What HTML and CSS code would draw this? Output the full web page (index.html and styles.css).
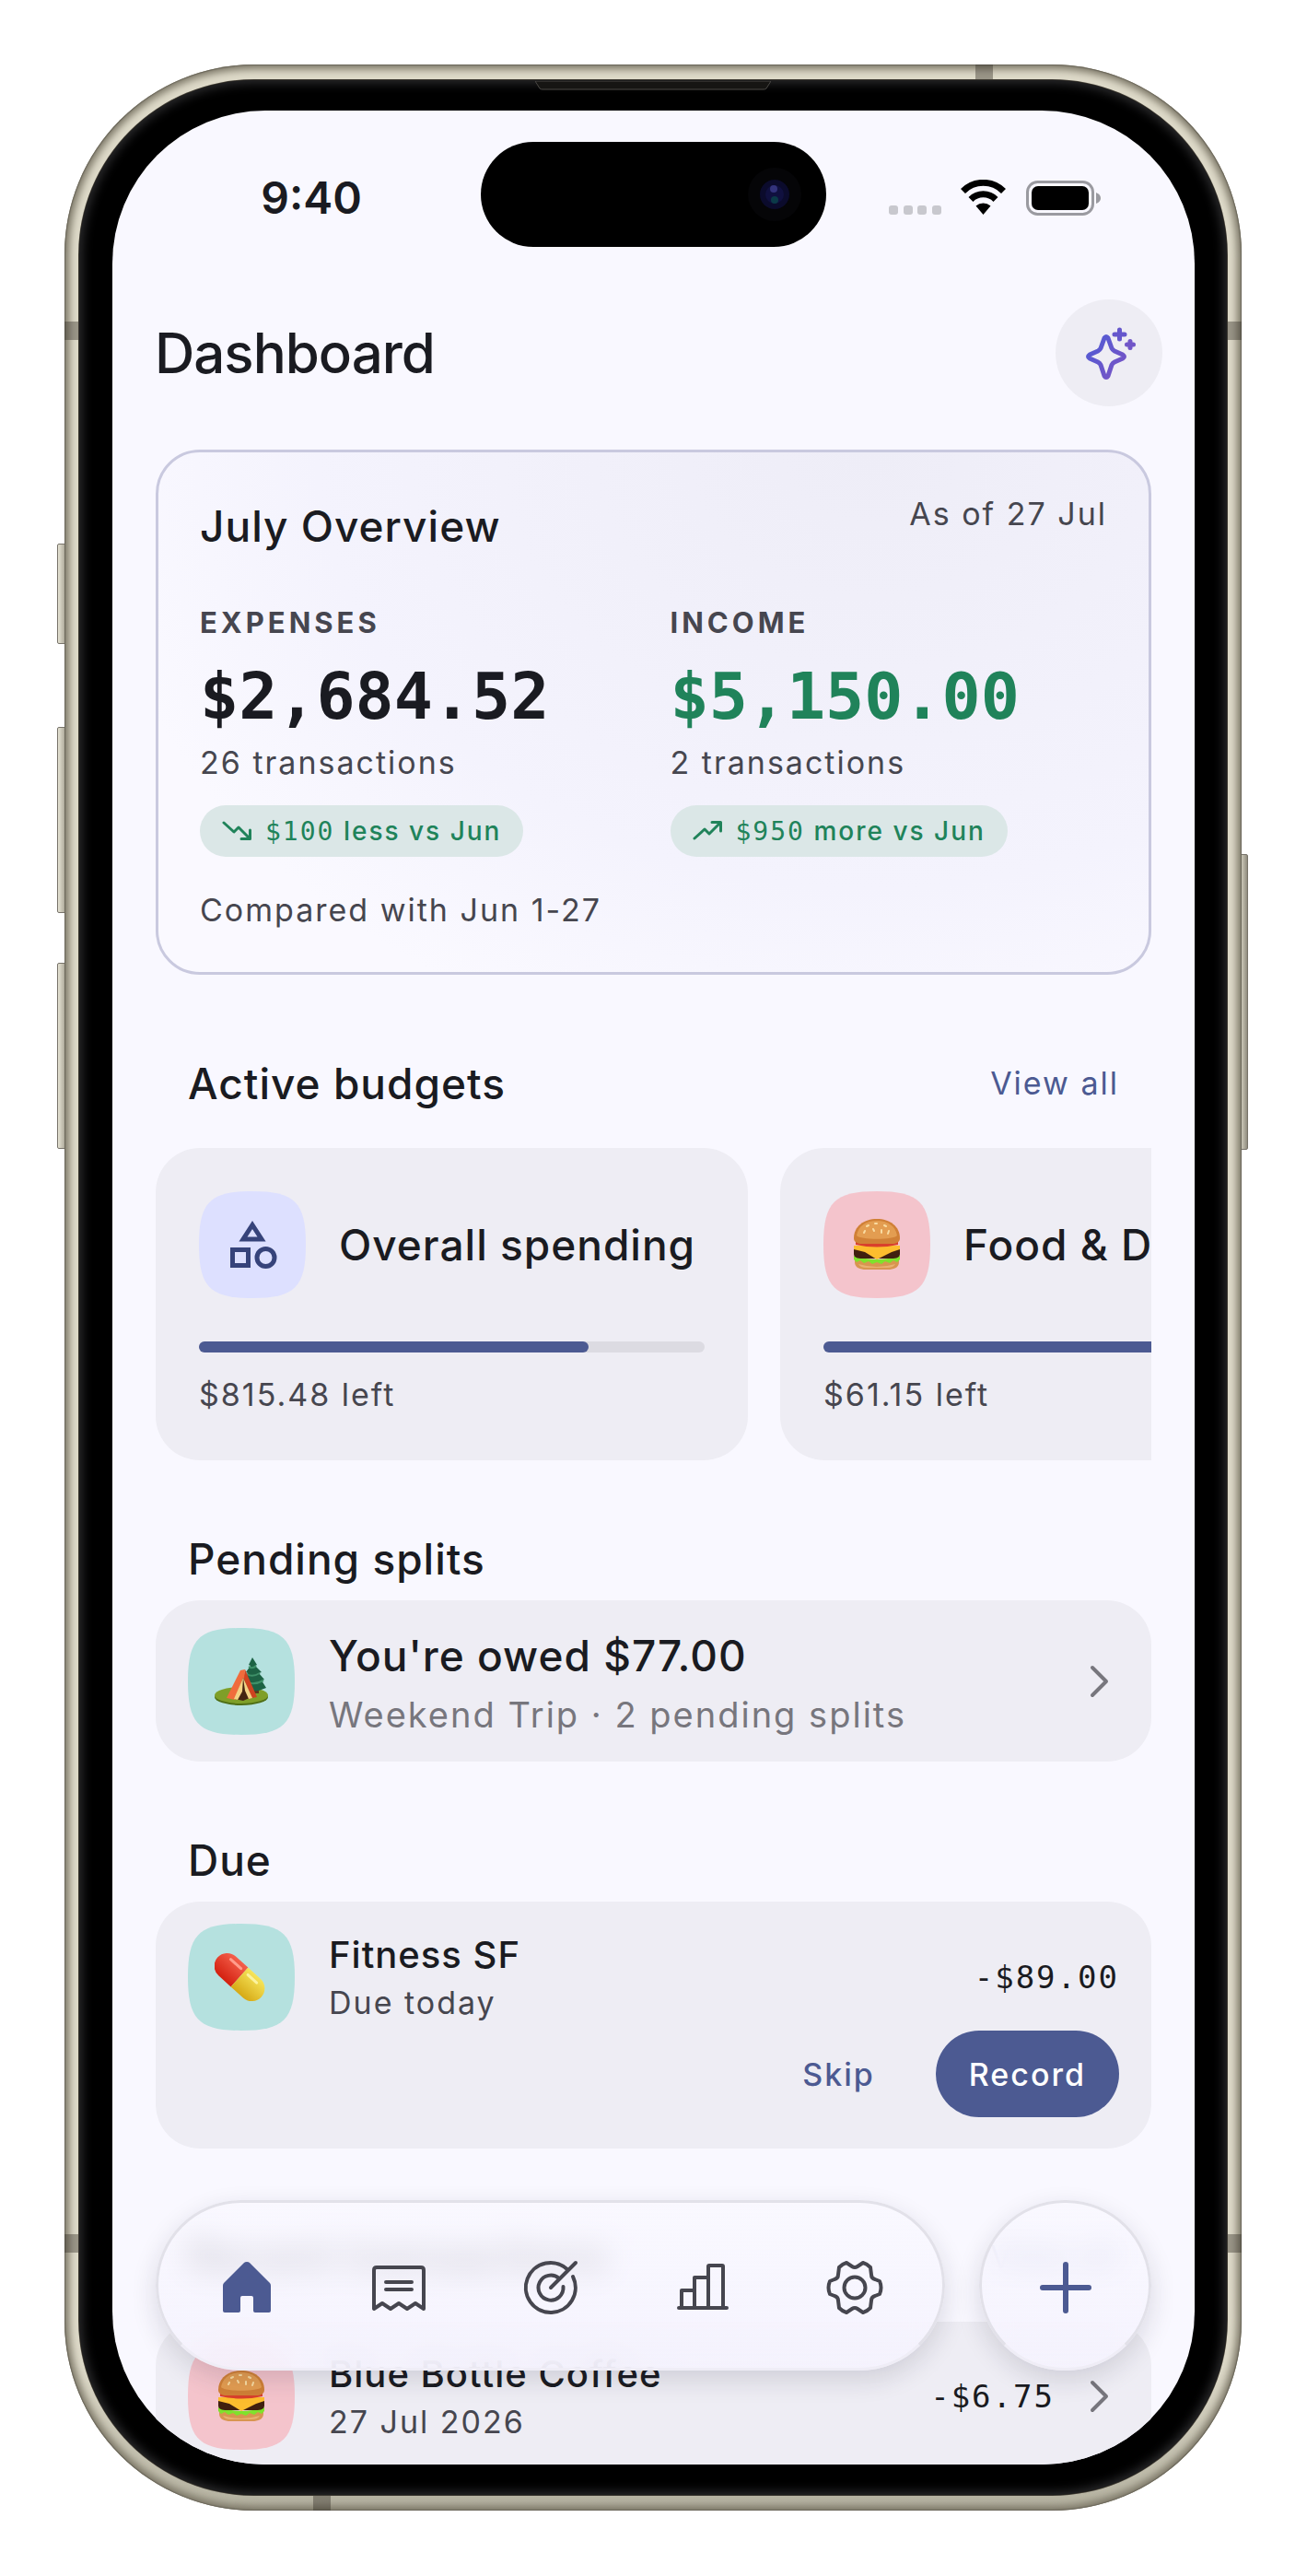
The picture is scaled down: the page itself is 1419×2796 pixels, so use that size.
FILE: index.html
```html
<!DOCTYPE html>
<html lang="en">
<head>
<meta charset="utf-8">
<meta name="viewport" content="width=device-width, initial-scale=1">
<title>Dashboard</title>
<link rel="stylesheet" href="styles.css">
</head>
<body>
<svg class="sprite" aria-hidden="true">
  <symbol id="squircle" viewBox="0 0 116 116"><path d="M58 0C104 0 116 12 116 58S104 116 58 116 0 104 0 58 12 0 58 0Z"/></symbol>
  <symbol id="chevron" viewBox="0 0 42 42"><path d="M13 6l15 15-15 15" fill="none" stroke="#77767d" stroke-width="4" stroke-linecap="round" stroke-linejoin="round"/></symbol>
  <symbol id="burger" viewBox="0 0 56 56">
    <path d="M4 44h48v3c0 6-6 8-12 8H16c-6 0-12-2-12-8z" fill="#d89550"/>
    <path d="M8 49q20 6 40 0-2 4-9 4H17q-7 0-9-4z" fill="#e8b070"/>
    <path d="M3 40q25 8 50 0l0 4-3 3-4-2-4 3-5-2-4 3-5-2-5 2-4-3-5 2-4-3-4 2-3-3z" fill="#7fe22c"/>
    <path d="M3 33h50v5c0 4-4 5-9 5H12c-5 0-9-1-9-5z" fill="#40200f"/>
    <path d="M3 29h50v4l-9 3-16 8-13-8-12-3z" fill="#fdbd2e"/>
    <path d="M5 25h46v3q-23 5-46 0z" fill="#d9402c"/>
    <path d="M3 21C3 8 14 0 28 0s25 8 25 21c0 4-4 6-9 6H12c-5 0-9-2-9-6z" fill="#d08036"/>
    <path d="M6 18C8 7 17 2 28 2s20 5 22 16c-4 5-40 5-44 0z" fill="#e39d51"/>
    <path d="M17 8l2-1M26 5h2M36 7l2 1M24 11l1 2M33 12v3M41 13l-1 3M15 13l-1 2" stroke="#f9dca2" stroke-width="2" stroke-linecap="round"/>
  </symbol>
  <symbol id="tent" viewBox="0 0 58 58">
    <ellipse cx="29" cy="46" rx="29" ry="9" fill="#4f6f16"/>
    <ellipse cx="29" cy="44" rx="29" ry="9" fill="#7f9f28"/>
    <path d="M43 35h5v7h-5z" fill="#5b3a1c"/>
    <path d="M41 3l5 8-2 1 7 7-3 1 6 7-3 1 5 8q-14 7-28 0l5-8-3-1 6-7-2-1 5-7-2-1z" fill="#1d6244"/>
    <path d="M37 13q4 3 8-1M35 21q6 4 14-1M33 29q9 5 20-1" stroke="#3e9068" stroke-width="2" fill="none"/>
    <path d="M33 16l13 30-10 2-5-20z" fill="#cf4320"/>
    <path d="M28 17l5-1-1 10-10 23-9-2z" fill="#f06c3c"/>
    <path d="M31 25l9 21-9 4-9-2z" fill="#452612"/>
    <path d="M31 25l-1 15-5 9-4-1zM31 25l2 14 4 9 4-1z" fill="#f3d385"/>
  </symbol>
</svg>

<main class="phone">
  <span class="key key-action"></span>
  <span class="key key-up"></span>
  <span class="key key-down"></span>
  <span class="key key-power"></span>
  <div class="frame">
    <span class="band band-left-top"></span>
    <span class="band band-left-bottom"></span>
    <span class="band band-right-top"></span>
    <span class="band band-right-bottom"></span>
    <span class="band band-top"></span>
    <span class="band band-bottom"></span>
    <div class="bezel">
      <svg class="speaker" viewBox="0 0 256 10" aria-hidden="true"><path d="M0 0h256l-5 8q-1 1-3 1H8q-2 0-3-1z" fill="#161513" stroke="#4a4845"/></svg>
      <div class="screen">

        <div class="status">
          <time class="clock">9:40</time>
          <div class="island">
            <svg width="60" height="60" viewBox="0 0 60 60" aria-hidden="true">
              <circle cx="30" cy="30" r="29" fill="#050507"/>
              <circle cx="30" cy="30" r="16" fill="#0b0b2c"/>
              <circle cx="30" cy="30" r="10" fill="#10103f"/>
              <circle cx="29" cy="24" r="4" fill="#33337c"/>
              <circle cx="30" cy="36" r="4" fill="#0b3a48"/>
            </svg>
          </div>
          <svg class="signals" width="230" height="40" viewBox="0 0 230 40" role="img" aria-label="Wi-Fi on, battery full">
            <g fill="#c8c8ce"><rect x="0" y="28" width="10" height="10" rx="3"/><rect x="16" y="28" width="10" height="10" rx="3"/><rect x="31" y="28" width="10" height="10" rx="3"/><rect x="47" y="28" width="10" height="10" rx="3"/></g>
            <g fill="none" stroke="#000" stroke-width="7"><path d="M80.500 12.500a31 31 0 0 1 44 0"/><path d="M89 21.500a19 19 0 0 1 27 0"/></g>
            <path d="M102.500 38l-8-9.500a12 12 0 0 1 16 0z"/>
            <rect x="150.500" y="2.500" width="71" height="35" rx="11" fill="none" stroke="#9a9aa0" stroke-width="3"/>
            <rect x="155" y="7" width="62" height="26" rx="7"/>
            <path d="M225 14q5 2 5 6t-5 6z" fill="#9a9aa0"/>
          </svg>
        </div>

        <header class="topbar">
          <h1>Dashboard</h1>
          <button class="assistant" type="button" aria-label="Assistant">
            <svg width="60" height="60" viewBox="0 0 60 60" fill="none">
              <defs><linearGradient id="spark" x1="0" y1="0" x2="1" y2="1"><stop offset="0" stop-color="#4f5bd5"/><stop offset="1" stop-color="#7b54c4"/></linearGradient></defs>
              <path d="M25 14q2-3 4 0l4 11q1 2 3 3l9 4q3 2 0 4l-9 4q-2 1-3 3l-4 12q-2 3-4 0l-4-12q-1-2-3-3l-9-4q-3-2 0-4l9-4q2-1 3-3z" stroke="url(#spark)" stroke-width="5" stroke-linejoin="round"/>
              <path d="M41.500 5v10M36 10h11" stroke="#6557cc" stroke-width="5" stroke-linecap="round"/>
              <path d="M53 17.500v7M49.500 21h7" stroke="#7156c8" stroke-width="5" stroke-linecap="round"/>
            </svg>
          </button>
        </header>

        <div class="content">
          <section class="overview">
            <div class="overview-head">
              <h2>July Overview</h2>
              <p class="small">As of 27 Jul</p>
            </div>
            <div class="totals">
              <div>
                <h3>Expenses</h3>
                <p class="amount">$2,684.52</p>
                <p class="small">26 transactions</p>
                <p class="chip">
                  <svg width="32" height="24" viewBox="0 0 32 24" aria-hidden="true"><path d="M2 3l11 10 5-5 12 12M21 20.500h9.500V11" fill="none" stroke="currentColor" stroke-width="3" stroke-linecap="round" stroke-linejoin="round"/></svg>
                  <span><span class="figures">$100</span> less vs Jun</span>
                </p>
              </div>
              <div>
                <h3>Income</h3>
                <p class="amount income">$5,150.00</p>
                <p class="small">2 transactions</p>
                <p class="chip">
                  <svg width="32" height="24" viewBox="0 0 32 24" aria-hidden="true"><path d="M2 20l11-10 5 5L30 3M21 2.500h9.500V12" fill="none" stroke="currentColor" stroke-width="3" stroke-linecap="round" stroke-linejoin="round"/></svg>
                  <span><span class="figures">$950</span> more vs Jun</span>
                </p>
              </div>
            </div>
            <p class="small compared">Compared with Jun 1-27</p>
          </section>

          <section>
            <div class="section-head with-link"><h2>Active budgets</h2><a href="#budgets">View all</a></div>
            <div class="budgets" id="budgets">
              <article class="card budget">
                <div class="budget-name">
                  <span class="tile lavender"><svg class="shape"><use href="#squircle"/></svg>
                    <svg class="glyph" width="56" height="56" viewBox="0 0 56 56" fill="none" stroke="#36437a" stroke-width="5" aria-hidden="true"><path d="M28 6.500l10 15.500h-20z"/><rect x="6.500" y="33.500" width="17" height="17"/><circle cx="42.500" cy="42" r="9.500"/></svg>
                  </span>
                  <h3>Overall spending</h3>
                </div>
                <div class="meter" role="progressbar" aria-label="Overall spending" aria-valuenow="77"><span style="width:77%"></span></div>
                <p class="small">$815.48 left</p>
              </article>
              <article class="card budget">
                <div class="budget-name">
                  <span class="tile pink"><svg class="shape"><use href="#squircle"/></svg><svg class="glyph" width="56" height="56"><use href="#burger"/></svg></span>
                  <h3>Food &amp; Drink</h3>
                </div>
                <div class="meter" role="progressbar" aria-label="Food and drink" aria-valuenow="80"><span style="width:80%"></span></div>
                <p class="small">$61.15 left</p>
              </article>
            </div>
          </section>

          <section>
            <div class="section-head"><h2>Pending splits</h2></div>
            <a class="card split" href="#weekend-trip">
              <span class="tile teal"><svg class="shape"><use href="#squircle"/></svg><svg class="glyph" width="58" height="58"><use href="#tent"/></svg></span>
              <span class="split-text">
                <strong>You're owed $77.00</strong>
                <span>Weekend Trip · 2 pending splits</span>
              </span>
              <svg class="chevron" width="42" height="42"><use href="#chevron"/></svg>
            </a>
          </section>

          <section>
            <div class="section-head"><h2>Due</h2></div>
            <article class="card entry">
              <div class="row">
                <span class="tile teal"><svg class="shape"><use href="#squircle"/></svg>
                  <svg class="glyph" width="58" height="58" viewBox="0 0 58 58" aria-hidden="true">
                    <defs><linearGradient id="red" x1="0" y1="0" x2="0" y2="1"><stop offset="0" stop-color="#f4604c"/><stop offset="1" stop-color="#d3200f"/></linearGradient><linearGradient id="yellow" x1="0" y1="0" x2="0" y2="1"><stop offset="0" stop-color="#f6e55a"/><stop offset="1" stop-color="#d6a915"/></linearGradient></defs>
                    <g transform="rotate(42 27 29)"><path d="M27 15H9a14 14 0 0 0 0 28h18z" fill="url(#red)"/><path d="M27 15h18a14 14 0 0 1 0 28H27z" fill="url(#yellow)"/><path d="M7 21h15" stroke="#ff9c8c" stroke-width="3" stroke-linecap="round"/><path d="M32 21h13" stroke="#fbf3a0" stroke-width="3" stroke-linecap="round"/></g>
                  </svg>
                </span>
                <div class="row-text"><h3>Fitness SF</h3><p class="small">Due today</p></div>
                <p class="figures sum">-$89.00</p>
              </div>
              <div class="actions">
                <button class="button" type="button">Skip</button>
                <button class="button filled" type="button">Record</button>
              </div>
            </article>
          </section>

          <section>
            <div class="section-head with-link"><h2>Recent transactions</h2><a href="#recent">View all</a></div>
            <article class="card entry last" id="recent">
              <div class="row">
                <span class="tile pink"><svg class="shape"><use href="#squircle"/></svg><svg class="glyph" width="56" height="56"><use href="#burger"/></svg></span>
                <div class="row-text"><h3>Blue Bottle Coffee</h3><p class="small">27 Jul 2026</p></div>
                <p class="figures sum">-$6.75</p>
                <svg class="chevron" width="42" height="42"><use href="#chevron"/></svg>
              </div>
            </article>
          </section>
        </div>

        <div class="dock">
          <nav class="glass tabs" aria-label="Main">
            <a href="#home" aria-label="Home" aria-current="page"><svg width="64" height="64" viewBox="0 0 64 64"><path d="M32 4q2 0 3 1l22 22q1 1 1 3v27q0 2-2 2H41q-2 0-2-2V43q0-2-2-2H27q-2 0-2 2v14q0 2-2 2H8q-2 0-2-2V30q0-2 1-3L29 5q1-1 3-1z" fill="#4c5a92"/></svg></a>
            <a href="#transactions" aria-label="Transactions"><svg width="64" height="64" viewBox="0 0 64 64"><path d="M5 55V13q0-3 3-3h48q3 0 3 3v42l-9-6-9 6-9-6-9 6-9-6zM18 26h28M18 34h28"/></svg></a>
            <a href="#goals" aria-label="Goals"><svg width="64" height="64" viewBox="0 0 64 64"><path d="M32 32L59 5M51 13A27 27 0 1 0 56 20M41 22A13.500 13.500 0 1 0 45.500 31"/></svg></a>
            <a href="#reports" aria-label="Reports"><svg width="64" height="64" viewBox="0 0 64 64"><path d="M6 54h52M9 54V35h14M23 54V21h15M38 54V9q0-1 1-1h14q1 0 1 1v45"/></svg></a>
            <a href="#settings" aria-label="Settings"><svg width="64" height="64" viewBox="0 0 64 64"><path d="M23 5q-4 1-8 5l-1 8q0 4-4 5l-5 2q-3 7 0 14l5 2q4 1 4 5l1 8q4 4 8 5l6-4q3-2 6 0l6 4q4-1 8-5l1-8q0-4 4-5l5-2q3-7 0-14l-5-2q-4-1-4-5l-1-8q-4-4-8-5l-6 4q-3 2-6 0z"/><circle cx="32" cy="32" r="11.500"/></svg></a>
          </nav>
          <button class="glass add" type="button" aria-label="Add transaction"><svg width="64" height="64" viewBox="0 0 64 64"><path d="M32 7v50M7 32h50"/></svg></button>
        </div>
      </div>
    </div>
  </div>
</main>
</body>
</html>
```

FILE: styles.css
```css
:root {
  --surface: #f9f8ff;
  --card: #eeedf4;
  --ink: #1a1b21;
  --muted: #46464f;
  --primary: #4c5a92;
  --green: #20835a;
  --mono: "DejaVu Sans Mono", monospace;
  --tracking: 1px;
  --tracking-wide: 2px;
}

* { box-sizing: border-box; }

body {
  margin: 0;
  background: #fff;
  color: var(--ink);
  font-family: Inter, "Liberation Sans", sans-serif;
}

h1, h2, h3, p { margin: 0; font-weight: 500; }
a { color: inherit; text-decoration: none; }
button { border: 0; padding: 0; font: inherit; background: none; }
svg { display: block; flex: none; }
.sprite { position: absolute; width: 0; height: 0; }

/* Device */
.phone { position: relative; padding: 70px 71px 70px 70px; }

.frame {
  position: relative;
  padding: 17px 16px;
  border-radius: 206px;
  background: linear-gradient(#dedac9 94%, #b4b1a0);
  box-shadow: inset 0 0 1px 1px #6a665a, inset 0 0 9px 5px #7b7666;
  overflow: hidden;
}

.bezel {
  position: relative;
  padding: 33px 35px 33px 36px;
  border-radius: 190px;
  background: #000;
  box-shadow: 0 0 0 1px #3b372f, inset 0 0 12px 3px #2e2e30;
}

.screen {
  position: relative;
  overflow: hidden;
  border-radius: 166px;
  background: var(--surface);
}

.speaker {
  position: absolute;
  top: 1px;
  left: 50%;
  width: 256px;
  height: 10px;
  margin-left: -128px;
}

.band { position: absolute; background: rgb(50 46 38 / 40%); }
.band-left-top, .band-left-bottom { left: 0; width: 16px; height: 20px; }
.band-right-top, .band-right-bottom { right: 0; width: 16px; height: 20px; }
.band-left-top, .band-right-top { top: 279px; }
.band-left-bottom, .band-right-bottom { bottom: 280px; }
.band-top { top: 0; right: 270px; width: 19px; height: 17px; }
.band-bottom { bottom: 0; left: 270px; width: 19px; height: 17px; }

.key {
  position: absolute;
  left: 62px;
  width: 12px;
  border: 1px solid #77736a;
  border-radius: 2px;
  background: linear-gradient(90deg, #e6e3d4, #b9b5a6 60%, #8f8b7e);
}
.key-action { top: 590px; height: 109px; }
.key-up { top: 789px; height: 202px; }
.key-down { top: 1045px; height: 202px; }
.key-power { top: 927px; left: auto; right: 64px; height: 321px; }

/* Status bar */
.status {
  display: grid;
  grid-template-columns: 1fr 375px 1fr;
  align-items: center;
  padding-top: 34px;
}
.clock { padding: 8px 0 0 32px; font-size: 48px; font-weight: 600; line-height: 64px; text-align: center; }
.signals { margin: 8px 0 0 68px; }
.island {
  display: flex;
  align-items: center;
  justify-content: flex-end;
  height: 114px;
  padding-right: 26px;
  border-radius: 57px;
  background: #000;
}

/* Header */
.topbar {
  display: flex;
  align-items: center;
  justify-content: space-between;
  padding: 57px 35px 0 46px;
}
h1 { font-size: 60px; line-height: 80px; letter-spacing: -1px; }
.assistant {
  display: grid;
  place-items: center;
  width: 116px;
  height: 116px;
  border-radius: 50%;
  background: var(--card);
}

.content { padding: 47px 47px 0; }

h2 { font-size: 46px; line-height: 64px; letter-spacing: var(--tracking); }
.small { color: var(--muted); font-size: 34px; font-weight: 400; line-height: 48px; letter-spacing: var(--tracking-wide); }
.figures, .amount { font-family: var(--mono); }

/* Overview */
.overview {
  padding: 43px 45px;
  border: 3px solid #c9c9df;
  border-radius: 48px;
  background: radial-gradient(ellipse 80% 120% at 72% 0, #eeedf7, #f4f3fd 70%, #faf9ff);
}
.overview-head { display: flex; justify-content: space-between; }
.overview-head h2 { line-height: 74px; }
.totals { display: grid; grid-template-columns: 1fr 1fr; gap: 36px; padding-top: 48px; }
.totals h3 {
  margin-bottom: 12px;
  color: var(--muted);
  font-size: 31px;
  font-weight: 700;
  line-height: 40px;
  letter-spacing: 4px;
  text-transform: uppercase;
}
.amount { font-size: 70px; font-weight: 700; line-height: 96px; }
.income { color: var(--green); }
.chip {
  display: inline-flex;
  align-items: center;
  gap: 15px;
  height: 56px;
  margin-top: 22px;
  padding: 0 24px;
  border-radius: 28px;
  background: #dbe7e7;
  color: var(--green);
  font-size: 28px;
  letter-spacing: var(--tracking-wide);
  white-space: nowrap;
}
.compared { padding-top: 34px; }

/* Sections */
.section-head { display: flex; align-items: center; justify-content: space-between; padding: 75px 35px 13px; }
.section-head.with-link { padding: 86px 35px 38px; }
.section-head a { color: var(--primary); font-size: 34px; line-height: 48px; letter-spacing: var(--tracking-wide); }
.card { border-radius: 48px; background: var(--card); }

.tile { position: relative; display: grid; flex: none; place-items: center; width: 116px; height: 116px; }
.tile .shape { position: absolute; inset: 0; width: 100%; height: 100%; }
.tile .glyph { position: relative; }
.lavender .shape { fill: #dde0ff; }
.pink .shape { fill: #f4c4cc; }
.teal .shape { fill: #b5e1df; }

.budgets { display: flex; gap: 35px; overflow: hidden; }
.budget { flex: 0 0 59%; min-width: 643px; padding: 47px; }
.budget-name { display: flex; align-items: center; gap: 36px; white-space: nowrap; }
.budget-name h3 { font-size: 46px; line-height: 64px; letter-spacing: var(--tracking); }
.meter { height: 12px; margin: 47px 0 22px; border-radius: 6px; background: #dcdbe2; }
.meter span { display: block; height: 100%; border-radius: 6px; background: var(--primary); }

.split { display: flex; align-items: center; gap: 37px; min-height: 175px; padding: 0 35px; }
.split-text { display: flex; flex: 1; flex-direction: column; padding-top: 8px; line-height: 64px; }
.split-text strong { font-size: 46px; font-weight: 500; letter-spacing: var(--tracking); }
.split-text span { color: #77767d; font-size: 38px; letter-spacing: var(--tracking-wide); }

.entry { padding: 24px 35px 34px; }
.entry.last { padding: 23px 35px 16px; border-radius: 48px 48px 0 0; }
.row { display: flex; align-items: center; gap: 37px; }
.row-text { flex: 1; }
.row-text h3 { font-size: 40px; line-height: 56px; letter-spacing: var(--tracking); }
.sum { font-size: 34px; letter-spacing: var(--tracking-wide); }
.row .chevron { margin-left: -9px; }

.actions { display: flex; justify-content: flex-end; gap: 30px; }
.button {
  height: 94px;
  padding: 0 36px;
  border-radius: 47px;
  color: var(--primary);
  font-size: 34px;
  font-weight: 500;
  letter-spacing: var(--tracking-wide);
}
.filled { background: var(--primary); color: #fff; }

/* Floating dock */
.dock { position: absolute; right: 47px; bottom: 102px; left: 47px; display: flex; gap: 37px; }
.glass {
  border: 3px solid #e2e1e9;
  border-bottom-color: #efedf6;
  border-radius: 93px;
  background: linear-gradient(rgb(249 248 255 / 74%), rgb(245 243 254 / 90%));
  box-shadow: 0 10px 28px rgb(30 30 50 / 14%);
  backdrop-filter: blur(16px);
}
.tabs { display: flex; flex: 1; justify-content: space-around; align-items: center; height: 185px; padding: 4px 13px 0; }
.tabs svg { fill: none; stroke: #46464f; stroke-width: 4; stroke-linecap: round; stroke-linejoin: round; }
.tabs [aria-current] svg { stroke: none; }
.add { display: grid; place-items: center; width: 187px; height: 185px; padding-top: 4px; }
.add svg { fill: none; stroke: var(--primary); stroke-width: 6; stroke-linecap: round; }
```
